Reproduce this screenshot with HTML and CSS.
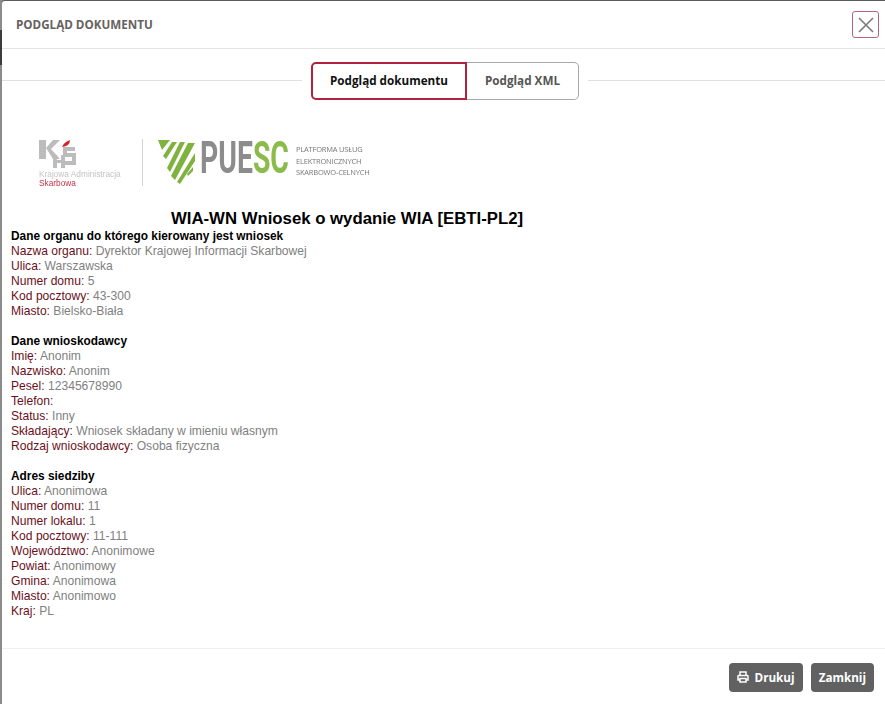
FILE: index.html
```html
<!DOCTYPE html>
<html lang="pl">
<head>
<meta charset="utf-8">
<title>Podgląd dokumentu</title>
<link rel="stylesheet" href="styles.css">
</head>
<body>
<div class="modal">
  <header class="modal-header">
    <h1 class="modal-title">PODGLĄD DOKUMENTU</h1>
    <button class="close" aria-label="Zamknij">
      <svg width="18" height="18" viewBox="0 0 18 18"><path d="M2 2 16 16M16 2 2 16" stroke="#7d7d7d" stroke-width="1.7" fill="none"/></svg>
    </button>
  </header>
  <div class="tabs-row">
    <div class="tabs">
      <button class="tab tab-active">Podgląd dokumentu</button>
      <button class="tab tab-other">Podgląd XML</button>
    </div>
  </div>
  <main class="doc">
    <div class="logos">
      <svg class="logo" width="345" height="52" viewBox="0 0 345 52">
        <!-- KAS mark -->
        <g fill="#bcbcbc">
          <rect x="0" y="2" width="7" height="19"/>
          <path d="M7 10 14 2h7l-9 9 9 10h-7z"/>
          <rect x="14" y="17" width="4" height="13"/>
          <rect x="22" y="17" width="4" height="13"/>
          <rect x="14" y="22" width="12" height="3"/>
          <path d="M24 9h12v4h-8v2h9v12H24v-4h9v-4h-9z"/>
        </g>
        <path d="M23 9q2-5 8-7 0 6-8 7z" fill="#d2232a"/>
        <text x="0" y="39" class="kas-1">Krajowa Administracja</text>
        <text x="0" y="48" class="kas-2">Skarbowa</text>
        <rect x="103" y="1" width="1" height="47" fill="#d4d4d4"/>
        <!-- PUESC shield -->
        <g fill="#7fb23f">
          <path d="M119 2h12l-8 10z"/>
          <path d="M133 4h5l-11 17-3-3z"/>
          <path d="M141 4h5l-15 30-3-4z"/>
          <path d="M149 5h7l-20 37-4-4z"/>
          <path d="M156 15v8l-15 23-3-2z"/>
          <path d="M154 29v4l-5 5-1-2z"/>
        </g>
        <text transform="translate(161 35) scale(.63 1)" class="puesc puesc-grey">PUE<tspan class="puesc-green">SC</tspan></text>
        <text x="257" y="14" class="plat">PLATFORMA USŁUG</text>
        <text x="257" y="26" class="plat">ELEKTRONICZNYCH</text>
        <text x="257" y="37" class="plat">SKARBOWO-CELNYCH</text>
      </svg>
    </div>
    <h2 class="doc-title">WIA-WN Wniosek o wydanie WIA [EBTI-PL2]</h2>
    <section class="group">
      <h3>Dane organu do którego kierowany jest wniosek</h3>
      <p><b>Nazwa organu:</b> Dyrektor Krajowej Informacji Skarbowej</p>
      <p><b>Ulica:</b> Warszawska</p>
      <p><b>Numer domu:</b> 5</p>
      <p><b>Kod pocztowy:</b> 43-300</p>
      <p><b>Miasto:</b> Bielsko-Biała</p>
    </section>
    <section class="group">
      <h3>Dane wnioskodawcy</h3>
      <p><b>Imię:</b> Anonim</p>
      <p><b>Nazwisko:</b> Anonim</p>
      <p><b>Pesel:</b> 12345678990</p>
      <p><b>Telefon:</b></p>
      <p><b>Status:</b> Inny</p>
      <p><b>Składający:</b> Wniosek składany w imieniu własnym</p>
      <p><b>Rodzaj wnioskodawcy:</b> Osoba fizyczna</p>
    </section>
    <section class="group">
      <h3>Adres siedziby</h3>
      <p><b>Ulica:</b> Anonimowa</p>
      <p><b>Numer domu:</b> 11</p>
      <p><b>Numer lokalu:</b> 1</p>
      <p><b>Kod pocztowy:</b> 11-111</p>
      <p><b>Województwo:</b> Anonimowe</p>
      <p><b>Powiat:</b> Anonimowy</p>
      <p><b>Gmina:</b> Anonimowa</p>
      <p><b>Miasto:</b> Anonimowo</p>
      <p><b>Kraj:</b> PL</p>
    </section>
  </main>
  <footer class="modal-footer">
    <button class="btn">
      <svg width="12" height="12" viewBox="0 0 12 12"><path d="M3 4.5V1h6v3.5M3 9H1V5.2q0-.7.7-.7h8.6q.7 0 .7.7V9H9M3 7.5h6V11H3z" fill="none" stroke="#fff" stroke-width="1.5"/></svg>
      Drukuj
    </button>
    <button class="btn">Zamknij</button>
  </footer>
</div>
</body>
</html>
```
FILE: styles.css
```css
* { box-sizing: border-box; }
html, body { height: 100%; }
body {
  margin: 0;
  height: 704px;
  overflow: hidden;
  padding: 1px 0 0 2px;
  background: linear-gradient(#8b8b8b 0 30px, #3c3c3c 30px 65px, #8b8b8b 65px);
  font-family: "Liberation Sans", Arial, sans-serif;
}
.modal {
  height: 703px;
  background: #fff;
  border-top-left-radius: 3px;
  display: flex;
  flex-direction: column;
  box-shadow: 0 -1px 0 #5c5c5a;
}
.modal-header {
  height: 48px;
  border-bottom: 1px solid #e5e5e5;
  display: flex;
  align-items: center;
  justify-content: space-between;
  padding: 0 6px 0 14px;
}
.modal-title {
  margin: 0;
  padding-top: 1px;
  font: 700 11.65px/16px "Open Sans", sans-serif;
  color: #66625f;
}
.close {
  width: 27px;
  height: 27px;
  padding: 0;
  background: #fff;
  border: 1px solid #b5657c;
  border-radius: 3px;
  display: flex;
  align-items: center;
  justify-content: center;
}
.tabs-row {
  margin-top: 13px;
  height: 38px;
  display: flex;
  justify-content: center;
  background: linear-gradient(#e0e0e0, #e0e0e0) no-repeat 0 18px / 100% 1px;
}
.tabs {
  display: flex;
  background: #fff;
  padding: 0 9px;
  margin-left: 3px;
}
.tab {
  height: 38px;
  font: 700 11.7px/16px "Open Sans", sans-serif;
  background: #fff;
  padding: 0 0 2px;
}
.tab-active {
  width: 156px;
  border: 2px solid #b0223f;
  border-radius: 5px 0 0 5px;
  color: #111;
}
.tab-other {
  width: 112px;
  border: 1px solid #a9a9a9;
  border-left: 0;
  border-radius: 0 5px 5px 0;
  color: #555;
}
.doc {
  flex: 1;
  padding: 0 0 0 9px;
  color: #808080;
  font-size: 12.1px;
  line-height: 15px;
}
.logos { height: 108px; padding: 38px 0 0 28px; }
.logo { display: block; filter: blur(.35px); }
.kas-1 { font: 8.3px "Liberation Sans", sans-serif; fill: #c4c4c4; }
.kas-2 { font: 8.3px "Liberation Sans", sans-serif; fill: #c8324a; }
.puesc { font: 700 45px "Roboto", sans-serif; }
.puesc-grey { fill: #8c8c8c; }
.puesc-green { fill: #8bbb4a; }
.plat { font: 7.5px "Open Sans", sans-serif; fill: #777; letter-spacing: -.2px; }
.doc-title {
  width: 672px;
  margin: 0 0 1px;
  padding-top: 1px;
  font-size: 16.75px;
  line-height: 19px;
  font-weight: 700;
  text-align: center;
  color: #000;
}
.group { margin-bottom: 15px; }
.group h3 {
  margin: 0;
  font-size: 11.87px;
  line-height: 15px;
  font-weight: 700;
  color: #000;
}
.group p { margin: 0; }
.group b { font-weight: 400; color: #6b0f1a; }
.modal-footer {
  height: 56px;
  border-top: 1px solid #eeeeee;
  display: flex;
  justify-content: flex-end;
  align-items: flex-start;
  gap: 8px;
  padding: 14px 11px 0 0;
}
.btn {
  height: 29px;
  padding: 0 8px 2px;
  background: #616161;
  color: #fff;
  border: 0;
  border-radius: 4px;
  font: 700 11.7px/16px "Open Sans", sans-serif;
  display: flex;
  align-items: center;
  gap: 5px;
}
```
